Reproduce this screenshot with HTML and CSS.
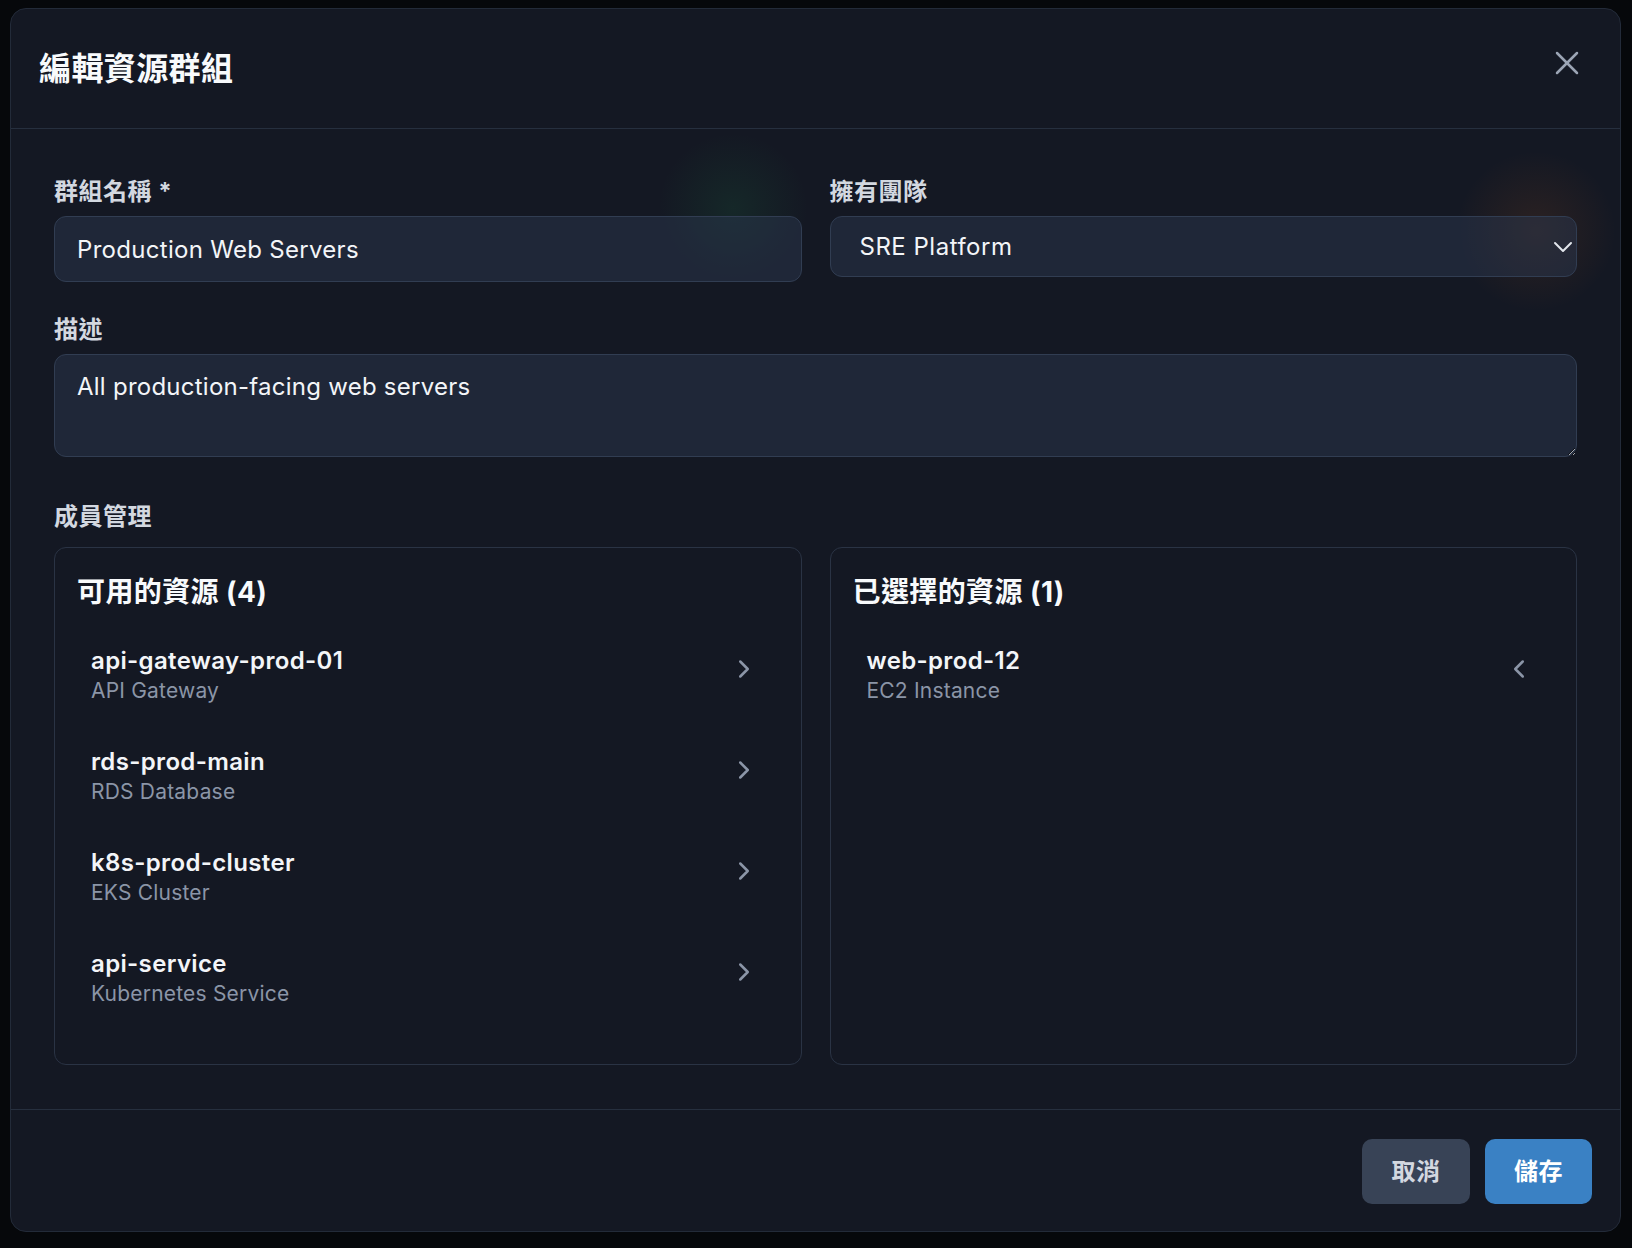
FILE: index.html
```html
<!DOCTYPE html>
<html lang="zh-Hant">
<head>
<meta charset="utf-8">
<title>編輯資源群組</title>
<link rel="stylesheet" href="styles.css">
</head>
<body>
<div class="modal">
  <header class="modal-header">
    <h2 class="modal-title">編輯資源群組</h2>
    <button class="close-btn" aria-label="關閉">
      <svg viewBox="0 0 24 24" width="40" height="40" fill="none" stroke="currentColor" stroke-width="1.5" stroke-linecap="round" stroke-linejoin="round"><path d="M18 6 6 18"/><path d="m6 6 12 12"/></svg>
    </button>
  </header>

  <div class="modal-body">
    <div class="grid-2">
      <div class="field">
        <label class="field-label">群組名稱 *</label>
        <input class="text-input" type="text" value="Production Web Servers">
      </div>
      <div class="field">
        <label class="field-label">擁有團隊</label>
        <div class="select-box">
          <span>SRE Platform</span>
          <svg viewBox="0 0 24 24" width="32" height="32" fill="none" stroke="currentColor" stroke-width="1.5" stroke-linecap="round" stroke-linejoin="round"><path d="m6 9 6 6 6-6"/></svg>
        </div>
      </div>
    </div>

    <div class="field field-desc">
      <label class="field-label">描述</label>
      <textarea class="text-area">All production-facing web servers</textarea>
    </div>

    <div class="section-label">成員管理</div>

    <div class="grid-2">
      <div class="panel">
        <h3 class="panel-title">可用的資源 (4)</h3>
        <div class="item">
          <div class="item-text"><div class="item-name">api-gateway-prod-01</div><div class="item-type">API Gateway</div></div>
          <span class="move-btn"><svg viewBox="0 0 24 24" width="30" height="30" fill="none" stroke="currentColor" stroke-width="2" stroke-linecap="round" stroke-linejoin="round"><path d="m9 18 6-6-6-6"/></svg></span>
        </div>
        <div class="item">
          <div class="item-text"><div class="item-name">rds-prod-main</div><div class="item-type">RDS Database</div></div>
          <span class="move-btn"><svg viewBox="0 0 24 24" width="30" height="30" fill="none" stroke="currentColor" stroke-width="2" stroke-linecap="round" stroke-linejoin="round"><path d="m9 18 6-6-6-6"/></svg></span>
        </div>
        <div class="item">
          <div class="item-text"><div class="item-name">k8s-prod-cluster</div><div class="item-type">EKS Cluster</div></div>
          <span class="move-btn"><svg viewBox="0 0 24 24" width="30" height="30" fill="none" stroke="currentColor" stroke-width="2" stroke-linecap="round" stroke-linejoin="round"><path d="m9 18 6-6-6-6"/></svg></span>
        </div>
        <div class="item">
          <div class="item-text"><div class="item-name">api-service</div><div class="item-type">Kubernetes Service</div></div>
          <span class="move-btn"><svg viewBox="0 0 24 24" width="30" height="30" fill="none" stroke="currentColor" stroke-width="2" stroke-linecap="round" stroke-linejoin="round"><path d="m9 18 6-6-6-6"/></svg></span>
        </div>
      </div>

      <div class="panel">
        <h3 class="panel-title">已選擇的資源 (1)</h3>
        <div class="item">
          <div class="item-text"><div class="item-name">web-prod-12</div><div class="item-type">EC2 Instance</div></div>
          <span class="move-btn"><svg viewBox="0 0 24 24" width="30" height="30" fill="none" stroke="currentColor" stroke-width="2" stroke-linecap="round" stroke-linejoin="round"><path d="m15 18-6-6 6-6"/></svg></span>
        </div>
      </div>
    </div>
  </div>

  <footer class="modal-footer">
    <button class="btn btn-cancel">取消</button>
    <button class="btn btn-save">儲存</button>
  </footer>
</div>
</body>
</html>
```
FILE: styles.css
```css
* { box-sizing: border-box; }

html, body { margin: 0; }

body {
  width: 1632px;
  height: 1248px;
  overflow: hidden;
  padding: 8px 0 0 10px;
  background: #06080b;
  font-family: Inter, "Noto Sans CJK TC", sans-serif;
}

.modal {
  width: 1611px;
  height: 1224px;
  display: flex;
  flex-direction: column;
  border: 1px solid #232b39;
  border-radius: 16px;
  overflow: hidden;
  background:
    radial-gradient(circle at 722px 199px, rgba(34, 197, 94, 0.09), rgba(34, 197, 94, 0) 75px),
    radial-gradient(circle at 1525px 222px, rgba(249, 115, 22, 0.10), rgba(249, 115, 22, 0) 80px),
    #141823;
}

.modal-header {
  height: 120px;
  flex: none;
  display: flex;
  align-items: center;
  justify-content: space-between;
  padding: 0 33px 0 28px;
  border-bottom: 1px solid #262f3e;
}

.modal-title {
  margin: 0;
  font-size: 32px;
  line-height: 44px;
  font-weight: 700;
  color: #f8fafc;
  letter-spacing: 0.4px;
}

.close-btn {
  width: 40px;
  height: 40px;
  padding: 0;
  margin-bottom: 11px;
  border: 0;
  background: none;
  color: #9ba4b4;
  display: flex;
}

.modal-body {
  flex: none;
  padding: 47px 43px 44px;
}

.grid-2 {
  display: grid;
  grid-template-columns: 1fr 1fr;
  gap: 28px;
  align-items: start;
}

.field-label {
  display: block;
  margin-bottom: 8px;
  font-size: 24px;
  line-height: 32px;
  font-weight: 700;
  color: #d3d8e0;
  letter-spacing: 0.5px;
}

.text-input {
  display: block;
  width: 100%;
  height: 66px;
  padding: 0 22px;
  border: 1px solid #313d52;
  border-radius: 12px;
  background: rgba(45, 58, 82, 0.45);
  color: #f3f5f8;
  font-family: Inter, "Noto Sans CJK TC", sans-serif;
  font-size: 24px;
  letter-spacing: 0.3px;
  outline: none;
}

.select-box {
  height: 61px;
  display: flex;
  align-items: center;
  justify-content: space-between;
  padding: 0 0 0 29px;
  border: 1px solid #313d52;
  border-radius: 12px;
  background: rgba(45, 58, 82, 0.45);
  color: #f3f5f8;
  font-size: 24px;
  letter-spacing: 0.5px;
}

.select-box svg {
  color: #e2e6ec;
  margin-right: -3px;
}

.field-desc { margin-top: 32px; }

.text-area {
  display: block;
  width: 100%;
  height: 103px;
  padding: 14px 22px;
  border: 1px solid #313d52;
  border-radius: 12px;
  background: rgba(45, 58, 82, 0.45);
  color: #f3f5f8;
  font-family: Inter, "Noto Sans CJK TC", sans-serif;
  font-size: 24px;
  line-height: 36px;
  letter-spacing: 0.25px;
  resize: vertical;
  outline: none;
}

.section-label {
  margin: 44px 0 14px;
  font-size: 24px;
  line-height: 32px;
  font-weight: 700;
  color: #d3d8e0;
  letter-spacing: 0.5px;
}

.panel {
  height: 518px;
  padding: 22px;
  border: 1px solid #2a3344;
  border-radius: 12px;
}

.panel-title {
  margin: 2px 0 17px;
  font-size: 28px;
  line-height: 40px;
  font-weight: 700;
  color: #f8fafc;
  letter-spacing: 0.4px;
}

.item {
  display: flex;
  align-items: center;
  justify-content: space-between;
  padding: 16px 14px;
  margin-bottom: 9px;
  border-radius: 10px;
}

.item-name {
  font-size: 24px;
  line-height: 32px;
  font-weight: 600;
  color: #f3f5f8;
  letter-spacing: 0.35px;
}

.item-type {
  font-size: 21px;
  line-height: 28px;
  color: #8b95a7;
  letter-spacing: 0.2px;
}

.move-btn {
  width: 42px;
  height: 42px;
  margin-bottom: 13px;
  display: flex;
  align-items: center;
  justify-content: center;
  color: #8b95a7;
}

.modal-footer {
  flex: none;
  display: flex;
  justify-content: flex-end;
  gap: 15px;
  padding: 29px 28px 27px;
  border-top: 1px solid #262f3e;
}

.btn {
  height: 65px;
  padding: 0 0 5px;
  border: 0;
  border-radius: 10px;
  font-family: Inter, "Noto Sans CJK TC", sans-serif;
  font-size: 24px;
  font-weight: 700;
  letter-spacing: 0.5px;
}

.btn-cancel {
  width: 108px;
  background: #384356;
  color: #d3d8e0;
}

.btn-save {
  width: 107px;
  background: #3a81c4;
  color: #ffffff;
}
```
